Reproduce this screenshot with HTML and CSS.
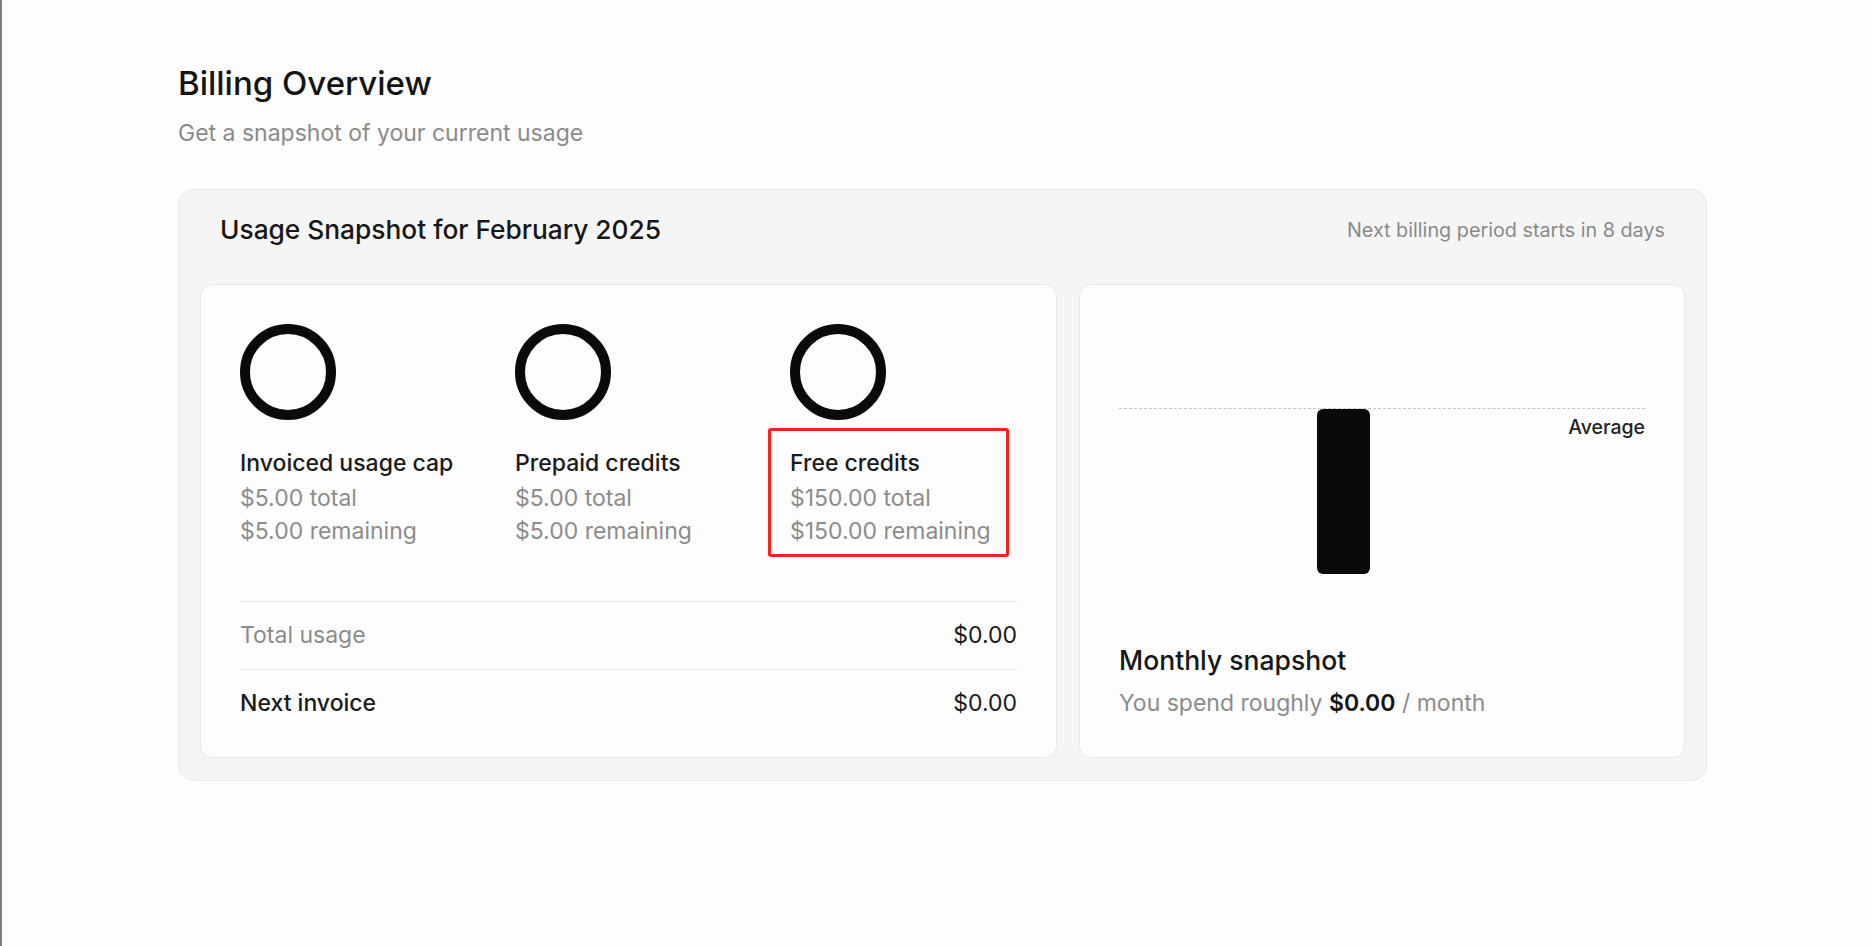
FILE: index.html
```html
<!DOCTYPE html>
<html lang="en">
<head>
<meta charset="utf-8">
<title>Billing Overview</title>
<link rel="stylesheet" href="styles.css">
</head>
<body>
<main class="page">
  <header class="page-head">
    <h1 class="page-title">Billing Overview</h1>
    <p class="page-sub">Get a snapshot of your current usage</p>
  </header>

  <section class="snapshot">
    <div class="snapshot-head">
      <h2 class="snapshot-title">Usage Snapshot for February 2025</h2>
      <span class="snapshot-note">Next billing period starts in 8 days</span>
    </div>

    <div class="snapshot-grid">
      <div class="panel usage">
        <div class="meters">
          <div class="meter">
            <div class="ring"></div>
            <div class="meter-info">
              <div class="meter-label">Invoiced usage cap</div>
              <div class="meter-value">$5.00 total</div>
              <div class="meter-value">$5.00 remaining</div>
            </div>
          </div>
          <div class="meter">
            <div class="ring"></div>
            <div class="meter-info">
              <div class="meter-label">Prepaid credits</div>
              <div class="meter-value">$5.00 total</div>
              <div class="meter-value">$5.00 remaining</div>
            </div>
          </div>
          <div class="meter">
            <div class="ring"></div>
            <div class="meter-info highlighted">
              <div class="meter-label">Free credits</div>
              <div class="meter-value">$150.00 total</div>
              <div class="meter-value">$150.00 remaining</div>
            </div>
          </div>
        </div>

        <div class="totals">
          <div class="total-row">
            <span class="total-label muted">Total usage</span>
            <span class="total-amount">$0.00</span>
          </div>
          <div class="total-row">
            <span class="total-label strong">Next invoice</span>
            <span class="total-amount">$0.00</span>
          </div>
        </div>
      </div>

      <div class="panel monthly">
        <div class="chart">
          <div class="bars">
            <div class="bar bar-empty"></div>
            <div class="bar bar-empty"></div>
            <div class="bar bar-empty"></div>
            <div class="bar bar-current"></div>
          </div>
          <div class="avg-line"></div>
          <div class="avg-label">Average</div>
        </div>
        <div class="monthly-text">
          <div class="monthly-title">Monthly snapshot</div>
          <div class="monthly-sub">You spend roughly <strong>$0.00</strong> / month</div>
        </div>
      </div>
    </div>
  </section>
</main>
</body>
</html>
```

FILE: styles.css
```css
* {
  box-sizing: border-box;
}

html, body {
  margin: 0;
  padding: 0;
}

body {
  min-height: 100vh;
  background: #fdfdfd;
  border-left: 2px solid #7c7c7c;
  font-family: Inter, "Noto Sans", "Liberation Sans", sans-serif;
  color: #171717;
}

.page {
  padding: 65px 0 0 176px;
  width: 1707px;
}

.page-title {
  margin: 0;
  font-size: 33px;
  line-height: 36px;
  font-weight: 500;
  color: #141414;
}

.page-sub {
  margin: 17px 0 0;
  font-size: 23px;
  line-height: 30px;
  color: #8a8a8a;
}

.snapshot {
  margin-top: 41px;
  width: 1529px;
  background: #f5f5f5;
  border: 1px solid #e9e9e9;
  border-radius: 16px;
  padding: 24px 21px 22px;
}

.snapshot-head {
  display: flex;
  align-items: center;
  justify-content: space-between;
  padding: 0 20px;
  height: 32px;
  margin-bottom: 38px;
}

.snapshot-title {
  margin: 0;
  font-size: 26.3px;
  line-height: 32px;
  font-weight: 500;
  color: #171717;
}

.snapshot-note {
  font-size: 19.8px;
  line-height: 28px;
  color: #8a8a8a;
}

.snapshot-grid {
  display: grid;
  grid-template-columns: 857px 606px;
  gap: 22px;
}

.panel {
  background: #fdfdfd;
  border: 1px solid #e8e8e8;
  border-radius: 12px;
}

.usage {
  padding: 39px 39px 20px;
}

.meters {
  display: grid;
  grid-template-columns: 275px 275px 1fr;
}

.ring {
  width: 96px;
  height: 96px;
  border: 10px solid #0a0a0a;
  border-radius: 50%;
}

.meter-info {
  display: inline-block;
  margin-top: 26px;
  position: relative;
}

.meter-label {
  font-size: 23px;
  line-height: 34px;
  font-weight: 500;
  color: #1a1a1a;
  margin-bottom: 2px;
}

.meter-value {
  font-size: 23px;
  line-height: 33px;
  color: #8c8c8c;
}

.highlighted::after {
  content: "";
  position: absolute;
  left: -22px;
  top: -18px;
  right: -18px;
  bottom: -9px;
  border: 3px solid #f5231b;
  border-radius: 3px;
  pointer-events: none;
}

.totals {
  margin-top: 53px;
}

.total-row {
  display: flex;
  justify-content: space-between;
  align-items: center;
  border-top: 1px solid #e6e6e6;
  padding: 17px 0;
  font-size: 23px;
  line-height: 33px;
}

.total-label.muted {
  color: #8c8c8c;
}

.total-label.strong {
  font-weight: 500;
  color: #1a1a1a;
}

.total-amount {
  color: #1a1a1a;
}

.monthly {
  display: flex;
  flex-direction: column;
  justify-content: space-between;
  padding: 39px 39px 38px;
}

.chart {
  position: relative;
  height: 250px;
  display: flex;
  align-items: flex-end;
}

.bars {
  display: flex;
  align-items: flex-end;
  gap: 14px;
}

.bar {
  width: 52px;
  border-radius: 6px;
}

.bar-empty {
  height: 6px;
  background: #ffffff;
  border-radius: 2px;
}

.bar-current {
  width: 53px;
  height: 165px;
  background: #0a0a0a;
}

.avg-line {
  position: absolute;
  left: 0;
  right: 0;
  top: 84px;
  border-top: 1px dashed #c4c4c4;
}

.avg-label {
  position: absolute;
  right: 0;
  top: 91px;
  font-size: 19.5px;
  line-height: 24px;
  font-weight: 500;
  color: #222;
}

.monthly-title {
  font-size: 26.5px;
  line-height: 34px;
  font-weight: 500;
  color: #171717;
}

.monthly-sub {
  margin-top: 10px;
  font-size: 23px;
  line-height: 32px;
  color: #8c8c8c;
}

.monthly-sub strong {
  color: #141414;
  font-weight: 600;
}
```
